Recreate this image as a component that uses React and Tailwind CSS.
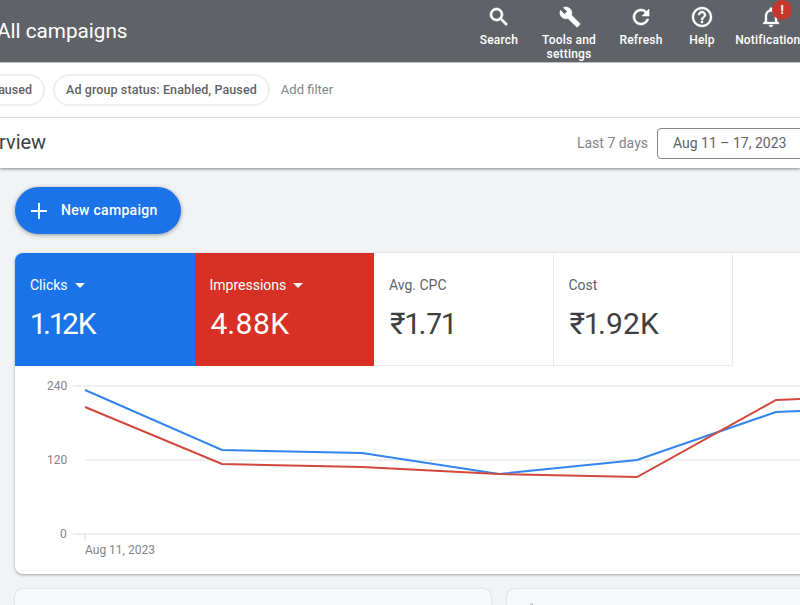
const font = 'font-["Roboto",sans-serif]'

const ToolButton = ({ label, icon, width, children }) => {
    return (
        <div className={`flex flex-col items-center shrink-0 ${width}`}>
            <div className="h-[24px] w-[24px] flex items-center justify-center relative">{icon}{children}</div>
            <div className="mt-[4px] text-[12px] leading-[14px] font-medium tracking-[0.2px] text-white text-center whitespace-pre-line">{label}</div>
        </div>
    )
}

const SearchIcon = () => (
    <svg width="24" height="24" viewBox="0 0 24 24" fill="#fff" stroke="#fff" strokeWidth="0.7">
        <path d="M15.5 14h-.79l-.28-.27A6.47 6.47 0 0 0 16 9.5 6.5 6.5 0 1 0 9.5 16c1.61 0 3.09-.59 4.23-1.57l.27.28v.79l5 4.99L20.49 19l-4.99-5zm-6 0C7.01 14 5 11.99 5 9.5S7.01 5 9.5 5 14 7.01 14 9.5 11.99 14 9.5 14z" />
    </svg>
)

const WrenchIcon = () => (
    <svg width="22" height="22" viewBox="0 0 24 24" fill="#fff" stroke="#fff" strokeWidth="0.6" className="ml-[1px]">
        <path d="M22.7 19l-9.1-9.1c.9-2.3.4-5-1.5-6.9-2-2-5-2.4-7.4-1.3L9 6 6 9 1.6 4.7C.4 7.1.9 10.1 2.9 12.1c1.9 1.9 4.6 2.4 6.9 1.5l9.1 9.1c.4.4 1 .4 1.4 0l2.3-2.3c.5-.4.5-1.1.1-1.4z" />
    </svg>
)

const RefreshIcon = () => (
    <svg width="24" height="24" viewBox="0 0 24 24" fill="#fff" stroke="#fff" strokeWidth="0.6">
        <path d="M17.65 6.35A7.95 7.95 0 0 0 12 4c-4.42 0-7.99 3.58-7.99 8s3.57 8 7.99 8c3.73 0 6.84-2.55 7.73-6h-2.08A5.99 5.99 0 0 1 12 18c-3.31 0-6-2.69-6-6s2.69-6 6-6c1.66 0 3.14.69 4.22 1.78L13 11h7V4l-2.35 2.35z" />
    </svg>
)

const HelpIcon = () => (
    <svg width="24" height="24" viewBox="0 0 24 24" fill="#fff" stroke="#fff" strokeWidth="0.4">
        <path d="M11 18h2v-2h-2v2zm1-16C6.48 2 2 6.48 2 12s4.48 10 10 10 10-4.48 10-10S17.52 2 12 2zm0 18c-4.41 0-8-3.59-8-8s3.59-8 8-8 8 3.59 8 8-3.59 8-8 8zm0-14c-2.21 0-4 1.79-4 4h2c0-1.1.9-2 2-2s2 .9 2 2c0 2-3 1.75-3 5h2c0-2.25 3-2.5 3-5 0-2.21-1.79-4-4-4z" />
    </svg>
)

const BellIcon = () => (
    <svg width="24" height="24" viewBox="0 0 24 24" fill="#fff" stroke="#fff" strokeWidth="0.3">
        <path d="M12 22c1.1 0 2-.9 2-2h-4c0 1.1.9 2 2 2zm6-6v-5c0-3.07-1.63-5.64-4.5-6.32V4c0-.83-.67-1.5-1.5-1.5s-1.5.67-1.5 1.5v.68C7.64 5.36 6 7.92 6 11v5l-2 2v1h16v-1l-2-2zm-2 1H8v-6c0-2.48 1.51-4.5 4-4.5s4 2.02 4 4.5v6z" />
    </svg>
)

const Caret = () => (
    <span className="ml-[7px] inline-block w-0 h-0 border-l-[5px] border-r-[5px] border-t-[5px] border-l-transparent border-r-transparent border-t-white" />
)

const Metric = ({ label, value, bg, caret, labelColor, valueColor, divider }) => (
    <div className={`w-[179.5px] h-full shrink-0 pl-[15px] pt-[23px] ${bg} ${divider ? 'border-r border-b border-[#e8eaed]' : ''}`}>
        <div className={`flex items-center h-[18px] text-[14px] leading-[18px] ${labelColor}`}>
            {label}
            {caret && <Caret />}
        </div>
        <div className={`mt-[12px] ml-px text-[30px] leading-[36px] proportional-nums ${valueColor}`}>{value}</div>
    </div>
)

const Chart = () => (
    <svg width="800" height="208" viewBox="0 0 800 208" fill="none" className="block">
        <path d="M73 20H800M85 94H800M73 168H800" stroke="#e8eaed" strokeWidth="1.5" />
        <path d="M85 168V175" stroke="#dadce0" />
        <path d="M85 24L222 84L362 87L499 108L637 94L776 46L800 45" stroke="#3285f0" strokeWidth="2" />
        <path d="M85 41L222 98L362 101L499 108L637 111L776 34L800 33" stroke="#d2483c" strokeWidth="2" />
    </svg>
)

const App = () => {
    return (
        <div className={`w-[800px] h-[605px] overflow-hidden bg-[#f1f3f4] flex flex-col ${font}`}>
            <header className="h-[62px] shrink-0 bg-[#5f6368] flex items-start overflow-hidden">
                <div className="ml-[-3px] mt-[17px] text-[20.7px] leading-[28px] text-white flex-1">All campaigns</div>
                <div className="flex shrink-0 pt-[5px] w-[332px]">
                    <ToolButton label="Search" icon={<SearchIcon />} width="w-[62px]" />
                    <ToolButton label={'Tools and\nsettings'} icon={<WrenchIcon />} width="w-[78px]" />
                    <ToolButton label="Refresh" icon={<RefreshIcon />} width="w-[56px] ml-[5px]" />
                    <ToolButton label="Help" icon={<HelpIcon />} width="w-[32px] ml-[17px]" />
                    <ToolButton label="Notifications" icon={<BellIcon />} width="w-[72px] ml-[17px]">
                        <span className="absolute left-[13px] top-[-5px] w-[20px] h-[20px] rounded-full bg-[#c5372b] text-white text-[12px] leading-[20px] font-bold text-center">!</span>
                    </ToolButton>
                </div>
            </header>

            <div className="h-[56px] shrink-0 bg-white border-t border-[#bdc1c6] border-b border-b-[#e8eaed] flex items-center text-[13px] text-[#5f6368] overflow-hidden">
                <div className="h-[32px] w-[48px] ml-[-3px] rounded-r-full border-2 border-l-0 border-[#eceef0] flex items-center justify-end pr-[11px] font-medium text-[12.5px] shrink-0 overflow-hidden">
                    <span>aused</span>
                </div>
                <div className="ml-[8px] h-[32px] px-[11px] rounded-full border-2 border-[#eceef0] flex items-center font-medium whitespace-nowrap text-[12.5px] tracking-[0.1px]">
                    Ad group status: Enabled, Paused
                </div>
                <div className="ml-[11px] text-[#80868b]">Add filter</div>
            </div>

            <div className="h-[50px] shrink-0 bg-white shadow-[0_1px_3px_rgba(60,64,67,0.6)] flex items-center relative overflow-hidden">
                <div className="ml-[-1px] mb-[2px] text-[20px] text-[#3c4043] flex-1">rview</div>
                <div className="text-[14px] text-[#80868b] mr-[9px]">Last 7 days</div>
                <div className="w-[159px] mr-[-16px] h-[31px] rounded border border-[#80868b] pl-[15px] flex items-center text-[14px] text-[#5f6368]">Aug 11 – 17, 2023</div>
            </div>

            <main className="flex-1 px-[15px] pt-[19px] overflow-hidden">
                <button className="w-[166px] h-[47px] rounded-full bg-[#1a73e8] shadow-[0_1px_4px_rgba(60,64,67,0.5)] flex items-center text-white text-[14px] font-medium tracking-[0.3px]">
                    <svg width="18" height="18" viewBox="0 0 18 18" className="ml-[15px]" fill="none">
                        <path d="M9 1V17M1 9H17" stroke="#fff" strokeWidth="2" />
                    </svg>
                    <span className="ml-[13px]">New campaign</span>
                </button>

                <section className="mt-[19px] w-[830px] h-[321px] rounded-lg bg-white shadow-[0_1px_3px_rgba(60,64,67,0.45)] overflow-hidden">
                    <div className="flex h-[113px]">
                        <Metric label="Clicks" value="1.12K" bg="bg-[#1a73e8]" caret labelColor="text-white" valueColor="text-white tracking-[-1px]" />
                        <Metric label="Impressions" value="4.88K" bg="bg-[#d93025]" caret labelColor="text-white" valueColor="text-white" />
                        <Metric label="Avg. CPC" value="₹1.71" bg="bg-white" labelColor="text-[#5f6368]" valueColor="text-[#3c4043]" divider />
                        <Metric label="Cost" value="₹1.92K" bg="bg-white" labelColor="text-[#5f6368]" valueColor="text-[#3c4043]" divider />
                    </div>
                    <div className="relative ml-[-15px] h-[208px]">
                        <Chart />
                        <span className="absolute left-[47px] top-[13px] text-[12px] leading-[14px] text-[#80868b]">240</span>
                        <span className="absolute left-[47px] top-[87px] text-[12px] leading-[14px] text-[#80868b]">120</span>
                        <span className="absolute left-[60px] top-[161px] text-[12px] leading-[14px] text-[#80868b]">0</span>
                        <span className="absolute left-[85px] top-[177px] text-[12px] leading-[14px] text-[#80868b] whitespace-nowrap">Aug 11, 2023</span>
                    </div>
                </section>

                <div className="mt-[15px] flex gap-[16px]">
                    <div className="w-[476px] h-[40px] shrink-0 rounded-lg bg-[#f8f9fa] shadow-[0_0_2px_rgba(60,64,67,0.25)]" />
                    <div className="w-[400px] h-[40px] shrink-0 rounded-lg bg-[#f8f9fa] shadow-[0_0_2px_rgba(60,64,67,0.25)] pt-[14px] pl-[23px]">
                        <div className="w-[3px] h-[4px] rounded-full bg-[#bdc1c6]" />
                    </div>
                </div>
            </main>
        </div>
    )
}

export default App
